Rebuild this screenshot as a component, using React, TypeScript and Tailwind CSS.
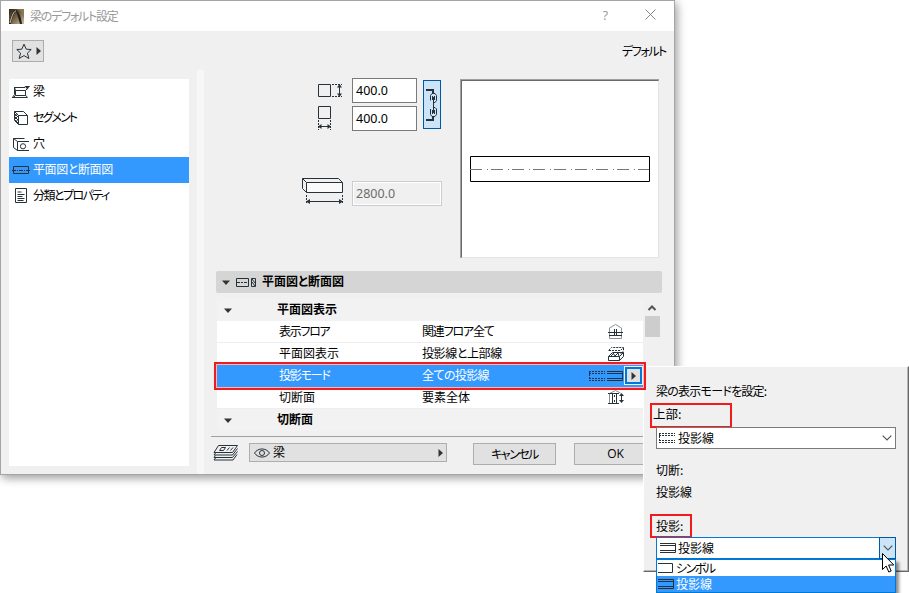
import type { ReactNode } from 'react';
import clsx from 'clsx';

type IconProps = { w: number; h: number; className?: string; children: ReactNode };

const Icon = ({ w, h, className, children }: IconProps) => (
  <svg
    width={w}
    height={h}
    viewBox={`0 0 ${w} ${h}`}
    fill="none"
    stroke="#263238"
    strokeWidth="1"
    className={clsx('shrink-0', className)}
  >
    {children}
  </svg>
);

const BeamIcon = () => (
  <Icon w={18} h={14}>
    <path d="M3.5 5.5h10v5h-10zM2 2.5h11M2.500 2.500v7L.5 12.500M0 12.500h15.500M13.500 5.500l2-2M13.500 10.500l2 1.500M3.500 5.500l-1-3M3.500 10.500l-2 2" />
    <path d="M12.500 1h5.500l-2.700 3.500z" fill="#263238" stroke="none" />
  </Icon>
);

const SegmentIcon = () => (
  <Icon w={18} h={16}>
    <path d="M6.500 5.500h9v9h-9zM6.500 5.500l-4-4v9l4 4M2.500 1.500h9l4 4M3 4l3 3M3 7l3 3M3 10l3 3M3 6l3-2M3 9l3-3M4 12l2-3" />
  </Icon>
);

const HoleIcon = () => (
  <Icon w={18} h={15}>
    <path d="M17 4.500H5.500v9H17M5.500 4.500l-4-3v9l4 3M1.500 1.500h11" />
    <circle cx="11" cy="9.300" r="2.600" />
  </Icon>
);

const PlanIcon = () => (
  <Icon w={18} h={10}>
    <path d="M1.500 1.500h15v7h-15z" />
    <path d="M0 5.500h18" strokeDasharray="4 1 1 1" />
  </Icon>
);

const PropertyIcon = () => (
  <Icon w={18} h={16}>
    <path d="M3.500.500h11v14h-11zM5.500 4h4M5.500 6.500h7M5.500 8.500h5M5.500 10.500h7M5.500 12.500h6" />
  </Icon>
);

const SectionIcon = () => (
  <Icon w={21} h={11}>
    <path d="M.5 1.500h12v8H.5zM15.500 1.500h4v8h-4zM16 2l3 4M16 5l3 4" />
    <path d="M1 5.500h11" strokeDasharray="3 1 2 1" />
  </Icon>
);

const HeightIcon = () => (
  <Icon w={26} h={16}>
    <path d="M1.500 1.500h12v12h-12z" />
    <path d="M15 1.500h10M15 13.500h10" strokeDasharray="2 1" />
    <path d="M22.500 2v11" />
    <path d="M20 4.500 22.500 1 25 4.500zM20 10.500 22.500 14 25 10.500z" fill="#263238" stroke="none" />
  </Icon>
);

const WidthIcon = () => (
  <Icon w={26} h={24}>
    <path d="M1.500.500h12v12h-12zM2 20.500h11" />
    <path d="M1.500 14v10M13.500 14v10" strokeDasharray="2 1" />
    <path d="M4.500 18 1 20.500 4.500 23zM10.500 18 14 20.500 10.500 23z" fill="#263238" stroke="none" />
  </Icon>
);

const LengthIcon = () => (
  <Icon w={42} h={28}>
    <path d="M4.500 5.500h36v10h-36z" fill="#fafafa" />
    <path d="M.5 1.500h36l4 4M.5 1.500l4 4M.5 1.500v10l4 4M5 24.500h35" />
    <path d="M4.500 18v9M40.500 18v9" strokeDasharray="2 1" />
    <path d="M8 22 4 24.500 8 27zM37 22 41 24.500 37 27z" fill="#263238" stroke="none" />
  </Icon>
);

const ChainIcon = () => (
  <Icon w={12} h={34}>
    <path d="M0 2h7v3M0 32h7v-3" strokeWidth="2" />
    <path d="M4.500 12.500v-5l1.500-2h3l1.500 2v5l-1.500 2H8M4.500 21v5.500l1.500 2h3l1.500-2V21L9 19.500H8M7.500 9v16M8.500 8v4M8.500 22v4M6.500 8v4M6.500 22v4" />
  </Icon>
);

const StarIcon = () => (
  <Icon w={16} h={17}>
    <path d="M8 1.200l2.200 5 5 .3-3.800 3.600 1.500 5.400L8 12.600l-4.900 2.900 1.500-5.400L.8 6.500l5-.3z" />
  </Icon>
);

const LogoIcon = () => (
  <svg width="15" height="15" viewBox="0 0 15 15" className="shrink-0">
    <defs>
      <linearGradient id="logo" x1="0" y1="0" x2="1" y2="1">
        <stop offset="0" stopColor="#2e2417" />
        <stop offset="0.5" stopColor="#6f6046" />
        <stop offset="1" stopColor="#d0c3a3" />
      </linearGradient>
    </defs>
    <path d="M0 0h15v15H0z" fill="url(#logo)" />
    <path d="M7 0c4 0 7 4 8 10V0z" fill="#8a7853" />
    <path d="M0 14C2 6 4 1 6 1c4 1 6 6 7 14h-2C9 8 8 4 7 3 5 4 3 9 2 15H0z" fill="#2a2217" />
    <path d="M1 14C3 6 5 2 7 2" stroke="#d9ccb0" fill="none" />
  </svg>
);

const FloorIcon = () => (
  <Icon w={16} h={15}>
    <path d="M1.500 14.500V4l6-3.500 6 3.500v10.500z" stroke="#8b9195" />
    <path d="M0 8.500h15M1 11.500h13M6.500 5v6M8.500 5v6" />
  </Icon>
);

const DisplayIcon = () => (
  <Icon w={16} h={16}>
    <path d="M.5 4.500l3-3h12l-3 3zM15.500 2v3l-3 3" strokeDasharray="2 1" />
    <path d="M.5 10.500h11v4H.5zM.5 10.500l4-4h11l-4 4M15.500 6.500v4l-4 4M3 10l3-3M5 7l2 3 3-3 1 3" />
  </Icon>
);

const CutIcon = () => (
  <Icon w={16} h={16}>
    <path d="M1.500 13V3.500l6-3 5 2.500" stroke="#8b9195" />
    <path d="M0 3.500h11M0 13.500h11M4.500 4v9M8.500 4v9M6.500 5v2M6.500 10v2M13.500 4v8" />
    <path d="M11 6l2.500-3L16 6zM11 10l2.500 3 2.500-3z" fill="#263238" stroke="none" />
  </Icon>
);

const DashedLinesIcon = () => (
  <Icon w={16} h={12}>
    <path d="M0 1.500h16M0 3.500h16M0 8.500h16M0 10.500h16" strokeDasharray="2 1" />
    <path d="M.5 1v10" strokeDasharray="2 1" />
  </Icon>
);

const LinesIcon = () => (
  <Icon w={16} h={12}>
    <path d="M0 1.500h15.500v9H0M0 3.500h15M0 8.500h15" />
  </Icon>
);

const SymbolIcon = () => (
  <Icon w={16} h={12}>
    <path d="M0 1.500h14.500v9H0" />
  </Icon>
);

const LayersIcon = () => (
  <Icon w={26} h={16}>
    <path d="M5.500.500h19l-5 7H1zM24.500 3.500l-5 6.500H1l1.500-2M24.500 6.500l-5 6H1l1.500-2M24 9.500l-4 5.500H1l1.500-2M8.500 2.500h4l-2 3h-4zM14 5.500l2.500-3M17.500 5.500l2.500-3" />
  </Icon>
);

const EyeIcon = () => (
  <Icon w={16} h={12}>
    <path d="M.5 6C4 .6 12 .6 15.500 6 12 11.400 4 11.400.500 6z" />
    <circle cx="8" cy="6" r="2.500" />
  </Icon>
);

const DownTriangle = () => (
  <svg width="8" height="5" className="shrink-0">
    <path d="M0 .5h8L4 5z" fill="#333" />
  </svg>
);

const RightTriangle = () => (
  <svg width="5" height="8" className="shrink-0">
    <path d="M.5 0v8L5 4z" fill="#333" />
  </svg>
);

const Chevron = ({ up }: { up?: boolean }) => (
  <svg width="10" height="6" fill="none" stroke="#555" strokeWidth={up ? 2 : 1.2} className="shrink-0">
    <path d={up ? 'M1.500 5 5 1.500 8.500 5' : 'M.7.700 5 5 9.300.700'} />
  </svg>
);

const NAV = [
  { label: '梁', icon: <BeamIcon />, tracking: '' },
  { label: 'セグメント', icon: <SegmentIcon />, tracking: 'tracking-[-1.9px]' },
  { label: '穴', icon: <HoleIcon />, tracking: '' },
  { label: '平面図と断面図', icon: <PlanIcon />, tracking: 'tracking-[-0.4px]', active: true },
  { label: '分類とプロパティ', icon: <PropertyIcon />, tracking: 'tracking-[-1.55px]' },
];

const ROWS = [
  { name: '平面図表示', group: true },
  { name: '表示フロア', nameTracking: 'tracking-[-1.3px]', value: '関連フロア全て', tracking: 'tracking-[-1.2px]', icon: <FloorIcon /> },
  { name: '平面図表示', value: '投影線と上部線', tracking: 'tracking-[-0.4px]', icon: <DisplayIcon /> },
  { name: '投影モード', nameTracking: 'tracking-[-1.2px]', value: '全ての投影線', tracking: 'tracking-[-0.6px]', active: true },
  { name: '切断面', value: '要素全体', icon: <CutIcon /> },
  { name: '切断面', group: true },
];

const Sidebar = () => (
  <nav className="mt-[9px] ml-2 h-[387px] w-[180px] shrink-0 bg-white">
    {NAV.map(item => (
      <div
        key={item.label}
        className={clsx('flex h-[26px] items-center gap-[3px] pl-[3px]', item.active && 'bg-[#3399ff] text-white')}
      >
        {item.icon}
        <span className={clsx('pb-[2px]', item.tracking)}>{item.label}</span>
      </div>
    ))}
  </nav>
);

const SizeFields = () => (
  <div className="flex h-[200px]">
    <div className="w-[244px] pt-[8px]">
      <div className="flex">
        <div className="ml-[113px] w-[35px] pt-[5px]">
          <HeightIcon />
          <div className="h-[7px]" />
          <WidthIcon />
        </div>
        <div className="flex w-[65px] flex-col gap-[3px]">
          <div className="flex h-[25px] items-center border border-[#7a7a7a] bg-white pl-[3px] font-['Noto_Sans'] text-[12.5px]">400.0</div>
          <div className="flex h-[25px] items-center border border-[#7a7a7a] bg-white pl-[3px] font-['Noto_Sans'] text-[12.5px]">400.0</div>
        </div>
        <div className="mt-[2px] ml-[6px] flex h-[49px] w-[18px] items-center justify-center border border-[#0059a5] bg-[#cce4f7]">
          <ChainIcon />
        </div>
      </div>
      <div className="mt-[46px] flex">
        <div className="ml-[98px] w-[50px]">
          <LengthIcon />
        </div>
        <div className="mt-[4px] flex h-[25px] w-[90px] items-center border border-[#ccc] bg-[#f0f0f0] pl-[3px] font-['Noto_Sans'] text-[12.5px] text-[#6d6d6d] ring-1 ring-white ring-inset">2800.0</div>
      </div>
    </div>
    {/* Plan preview */}
    <div className="mt-[9px] ml-[12px] flex h-[179px] w-[199px] border-t border-l border-t-[#a0a0a0] border-l-[#a0a0a0]">
      <div className="flex-1 border border-t-[#696969] border-r-[#e3e3e3] border-b-[#e3e3e3] border-l-[#696969] bg-white">
        <svg width="196" height="175" fill="none">
          <path d="M8.500 75.500h179v25h-179z" stroke="#000" />
          <path d="M8 88.500h179" stroke="#777" strokeDasharray="12 5 1 3" />
        </svg>
      </div>
    </div>
  </div>
);

const ParameterTable = () => (
  <div className="mt-[6px] ml-[13px] flex h-[137px]">
    <div className="w-[426px]">
      {ROWS.map((row, i) => (
        <div
          key={i}
          className={clsx(
            'flex h-[22px] items-center',
            row.group && 'bg-[#f2f2f2] font-bold',
            !row.group && !row.active && 'border-b border-[#eee] bg-white',
            row.active && 'bg-[#3399ff] text-white',
          )}
        >
          <div className="w-[60px] pl-[7px]">{row.group && <DownTriangle />}</div>
          <div className={clsx('w-[145px] pb-[2px]', !row.group && 'pl-[2px]', row.nameTracking)}>{row.name}</div>
          <div className={clsx('flex-1 pb-[2px]', row.tracking)}>{row.value}</div>
          {row.active ? (
            <div className="mr-px flex items-center gap-[2px] pb-px">
              <DashedLinesIcon />
              <LinesIcon />
              <div className="flex h-[17px] w-[17px] items-center justify-center border-2 border-[#0078d7] bg-[#e1e1e1] text-black ring-1 ring-[#e5f1fb]">
                <RightTriangle />
              </div>
            </div>
          ) : (
            <div className="w-[35px]">{row.icon}</div>
          )}
        </div>
      ))}
    </div>
    <div className="ml-px flex w-4 flex-col items-center pt-[6px]">
      <Chevron up />
      <div className="mt-[5px] h-[21px] w-[15px] bg-[#cdcdcd]" />
    </div>
  </div>
);

const FooterBar = () => (
  <div className="ml-[7px] flex w-[448px] border-t border-[#a0a0a0] pt-[6px]">
    <div className="w-[38px] pt-[2px] pl-[2px]">
      <LayersIcon />
    </div>
    <div className="flex h-[19px] w-[198px] items-center border border-[#adadad] bg-[#e1e1e1] pr-[3px] pl-1">
      <EyeIcon />
      <span className="ml-[3px] flex-1 pb-px">梁</span>
      <RightTriangle />
    </div>
    <div className="ml-[26px] flex h-[22px] w-[83px] items-center justify-center border border-[#adadad] bg-[#e1e1e1] tracking-[-1.5px]">キャンセル</div>
    <div className="ml-[18px] flex h-[22px] w-[84px] shrink-0 items-center justify-center border border-[#adadad] bg-[#e1e1e1] pr-px font-['Open_Sans'] text-[12px]">OK</div>
  </div>
);

const ModePopup = () => (
  <div className="absolute top-[366px] left-[643px] h-[206px] w-[266px] border border-t-white border-r-[#696969] border-b-[#696969] border-l-white bg-[#f0f0f0]">
    <div className="h-full border-r border-b border-[#b5b5b5] pt-[15px] pl-[12px]">
      <div className="h-[18px] leading-[18px] tracking-[-0.75px]">梁の表示モードを設定:</div>
      <div className="mt-[3px] ml-[-6px] flex h-[25px] w-[82px] items-center border-2 border-[#f21b1b] pb-[3px] pl-px text-[12.5px]">上部:</div>
      <div className="-mt-px flex h-[22px] w-[240px] items-center border border-[#7a7a7a] bg-white pr-[3px] pl-[2px]">
        <DashedLinesIcon />
        <span className="ml-[3px] flex-1 pb-px">投影線</span>
        <Chevron />
      </div>
      <div className="mt-[12px] h-[18px] leading-[18px]">切断:</div>
      <div className="mt-[4px] h-[18px] leading-[18px]">投影線</div>
      <div className="mt-[13px] ml-[-6px] flex h-[24px] w-[42px] items-center border-2 border-[#f21b1b] pb-px pl-[4px]">投影:</div>
      <div className="-mt-px flex h-[22px] w-[240px] items-center border border-[#0078d7] bg-white pl-[3px]">
        <LinesIcon />
        <span className="ml-[2px] flex-1 pb-px">投影線</span>
        <div className="-my-px -mr-px flex h-[22px] w-[17px] items-center justify-center border border-[#0059a5] bg-[#cce4f7]">
          <Chevron />
        </div>
      </div>
      <div className="relative h-[34px] w-[240px] border border-[#0078d7] bg-white shadow-[3px_3px_3px_rgba(0,0,0,0.45)]">
        <div className="flex h-4 items-center gap-[2px] pl-px">
          <SymbolIcon />
          <span className="pb-px tracking-[-1.5px]">シンボル</span>
        </div>
        <div className="flex h-4 items-center gap-[2px] bg-[#3399ff] pl-px text-white">
          <LinesIcon />
          <span className="pb-px">投影線</span>
        </div>
      </div>
    </div>
  </div>
);

const Cursor = () => (
  <svg width="13" height="20" className="absolute top-[553px] left-[882px]">
    <path d="M.5.500v16l3.700-3.500 2.600 6 2.400-1-2.600-6h5.200z" fill="#fff" stroke="#000" />
  </svg>
);

export default function App() {
  return (
    <div className="relative h-[593px] w-[909px] overflow-hidden bg-white font-['Noto_Sans_CJK_JP',sans-serif] text-[12px] leading-4 text-black [font-feature-settings:'palt']">
      <div className="h-[475px] w-[675px] border border-[#a5a5a5] bg-[#f0f0f0] shadow-[2px_3px_9px_rgba(0,0,0,0.4)]">
        {/* Title bar */}
        <header className="flex h-[30px] items-center bg-white pl-2 text-[#999]">
          <LogoIcon />
          <span className="ml-[6px] flex-1 pb-px tracking-[-1.25px]">梁のデフォルト設定</span>
          <span className="pb-[2px] font-['Open_Sans'] text-[13px]">?</span>
          <svg width="11" height="11" className="mr-[18px] mb-[3px] ml-[37px]" stroke="#888">
            <path d="M.5.500l10 10M10.500.500l-10 10" />
          </svg>
        </header>

        <div className="flex h-[39px] items-start justify-between pt-[9px] pr-2 pl-[11px]">
          <div className="flex h-[22px] w-8 items-center gap-[4px] border border-[#adadad] bg-[#e1e1e1] pl-[3px]">
            <StarIcon />
            <RightTriangle />
          </div>
          <span className="pt-[3px] tracking-[-1.4px]">デフォルト</span>
        </div>

        <div className="flex">
          <Sidebar />
          <div className="ml-2 h-[404px] w-[7px] shrink-0 bg-[#f7f7f7]" />
          <main className="w-[470px]">
            <SizeFields />
            <div className="mt-px ml-[12px] flex h-[22px] w-[446px] items-center rounded-[2px] bg-[#d5d5d5] pl-[6px] font-bold">
              <DownTriangle />
              <span className="ml-[6px]"><SectionIcon /></span>
              <span className="ml-[5px] pb-[2px]">平面図と断面図</span>
            </div>
            <ParameterTable />
            <FooterBar />
          </main>
        </div>
      </div>

      <ModePopup />
      {/* Highlight around the selected parameter row */}
      <div className="absolute top-[362px] left-[214px] h-[28px] w-[432px] border-2 border-[#f21b1b] ring-1 ring-[#ffb0b0] ring-inset" />
      <Cursor />
    </div>
  );
}
